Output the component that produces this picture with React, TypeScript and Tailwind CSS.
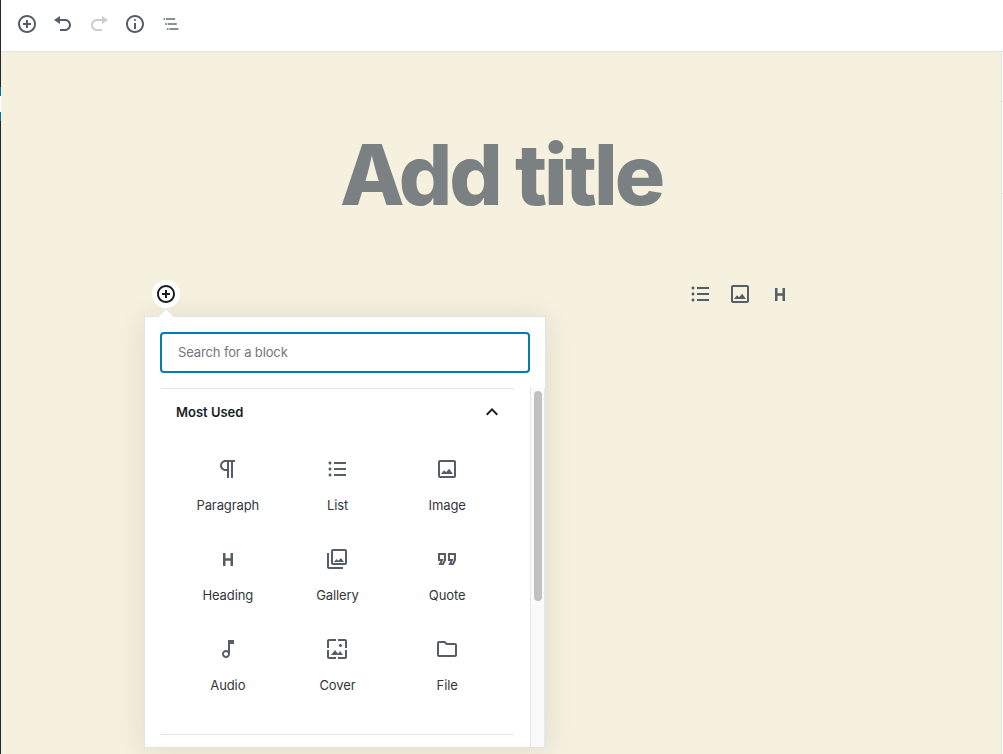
import React from "react";

type IconProps = { d: string; size?: 20 | 24; className?: string };

// Dashicons are drawn on a 20 unit grid, block icons on a 24 unit grid.
function Icon({ d, size = 24, className = "" }: IconProps) {
  return (
    <svg
      viewBox={`0 0 ${size} ${size}`}
      width={size}
      height={size}
      className={`block shrink-0 fill-current ${className}`}
      aria-hidden="true"
    >
      <path d={d} />
    </svg>
  );
}

const INSERT =
  "M10 1c-5 0-9 4-9 9s4 9 9 9 9-4 9-9-4-9-9-9zm0 16c-3.9 0-7-3.1-7-7s3.1-7 7-7 7 3.1 7 7-3.1 7-7 7zm1-11H9v3H6v2h3v3h2v-3h3V9h-3V6z";
const UNDO =
  "M12 5H7V2L1 6l6 4V7h5c2.2 0 4 1.8 4 4s-1.8 4-4 4H7v2h5c3.3 0 6-2.7 6-6s-2.7-6-6-6z";
const REDO =
  "M8 5h5V2l6 4-6 4V7H8c-2.2 0-4 1.8-4 4s1.8 4 4 4h5v2H8c-3.3 0-6-2.7-6-6s2.7-6 6-6z";
const INFO =
  "M9 15h2V9H9v6zm1-10c-.5 0-1 .5-1 1s.5 1 1 1 1-.5 1-1-.5-1-1-1zm0-4c-5 0-9 4-9 9s4 9 9 9 9-4 9-9-4-9-9-9zm0 16c-3.9 0-7-3.1-7-7s3.1-7 7-7 7 3.1 7 7-3.1 7-7 7z";
const OUTLINE =
  "M5 5H3v2h2V5zm3 8h11v-2H8v2zm9-8H6v2h11V5zM7 11H5v2h2v-2zm0 8h2v-2H7v2zm3-2v2h11v-2H10z";
const PARAGRAPH =
  "M11 5v7H9.5C7.6 12 6 10.4 6 8.5S7.6 5 9.5 5H11m8-2H9.5C6.5 3 4 5.5 4 8.5S6.5 14 9.5 14H11v7h2V5h2v16h2V5h2V3z";
const LIST =
  "M9 19h12v-2H9v2zm0-6h12v-2H9v2zm0-8v2h12V5H9zm-4-.5c-.83 0-1.5.67-1.5 1.5S4.17 7.5 5 7.5 6.5 6.83 6.5 6 5.83 4.5 5 4.5zm0 6c-.83 0-1.5.67-1.5 1.5s.67 1.5 1.5 1.5 1.5-.67 1.5-1.5-.67-1.5-1.5-1.5zm0 6c-.83 0-1.5.67-1.5 1.5s.67 1.5 1.5 1.5 1.5-.67 1.5-1.5-.67-1.5-1.5-1.5z";
const IMAGE =
  "M19 5v14H5V5h14m0-2H5c-1.1 0-2 .9-2 2v14c0 1.1.9 2 2 2h14c1.1 0 2-.9 2-2V5c0-1.1-.9-2-2-2zM6 17l3-3.86 2.1 2.1 3-3.38L18 17z";
const HEADING = "M12.5 4v5.2h-5V4H5v13h2.5v-5.2h5V17H15V4";
const GALLERY =
  "M20 4v12H8V4h12m0-2H8c-1.1 0-2 .9-2 2v12c0 1.1.9 2 2 2h12c1.1 0 2-.9 2-2V4c0-1.1-.9-2-2-2zM9 15l2.5-3 1.7 1.8L16 11l3 4zM2 6v14c0 1.1.9 2 2 2h14v-2H4V6H2z";
const QUOTE =
  "M18.62 18h-5.24l2-4H13V6h8v7.24L18.62 18zm-2-2h.76L19 12.76V8h-4v4h3.62l-2 4zm-8 2H3.38l2-4H3V6h8v7.24L8.62 18zm-2-2h.76L9 12.76V8H5v4h3.62l-2 4z";
const AUDIO =
  "M12 3l.01 10.55c-.59-.34-1.27-.55-2-.55C7.79 13 6 14.79 6 17s1.79 4 4.01 4S14 19.21 14 17V7h4V3h-6zm-1.99 16c-1.1 0-2-.9-2-2s.9-2 2-2 2 .9 2 2-.9 2-2 2z";
const COVER =
  "M4 4h7V2H4c-1.1 0-2 .9-2 2v7h2V4zm6 9l-4 5h12l-3-4-2.03 2.71L10 13zm7-4.5c0-.83-.67-1.5-1.5-1.5S14 7.67 14 8.5s.67 1.5 1.5 1.5S17 9.33 17 8.5zM20 2h-7v2h7v7h2V4c0-1.1-.9-2-2-2zm0 18h-7v2h7c1.1 0 2-.9 2-2v-7h-2v7zM4 13H2v7c0 1.1.9 2 2 2h7v-2H4v-7z";
const FILE =
  "M9.17 6l2 2H20v10H4V6h5.17M10 4H4c-1.1 0-1.99.9-1.99 2L2 18c0 1.1.9 2 2 2h16c1.1 0 2-.9 2-2V8c0-1.1-.9-2-2-2h-8l-2-2z";
const CHEVRON_UP = "M12 8l-6 6 1.41 1.41L12 10.83l4.59 4.58L18 14l-6-6z";

const blocks: { label: string; d: string; size?: 20 | 24 }[] = [
  { label: "Paragraph", d: PARAGRAPH },
  { label: "List", d: LIST },
  { label: "Image", d: IMAGE },
  { label: "Heading", d: HEADING, size: 20 },
  { label: "Gallery", d: GALLERY },
  { label: "Quote", d: QUOTE },
  { label: "Audio", d: AUDIO },
  { label: "Cover", d: COVER },
  { label: "File", d: FILE },
];

function Toolbar() {
  return (
    <header className="flex h-[52px] shrink-0 items-start gap-4 border-b border-[#e2e4e7] bg-white pt-[14px] pl-4 text-[#555d66]">
      <button aria-label="Add block"><Icon d={INSERT} size={20} /></button>
      <button aria-label="Undo"><Icon d={UNDO} size={20} /></button>
      <button aria-label="Redo" className="opacity-30"><Icon d={REDO} size={20} /></button>
      <button aria-label="Content structure"><Icon d={INFO} size={20} /></button>
      <button aria-label="Block navigation">
        <svg viewBox="0 0 24 24" width="20" height="20" className="block fill-current opacity-90" aria-hidden="true">
          <path d={OUTLINE} />
        </svg>
      </button>
    </header>
  );
}

function Inserter() {
  return (
    <div className="absolute top-[36px] -left-2 flex h-[432px] w-[402px] flex-col border border-[#e2e4e7] bg-white shadow-[0_3px_30px_rgba(25,30,35,0.1)]">
      <svg viewBox="0 0 16 9" width="16" height="9" className="absolute -top-2 left-[13px]" aria-hidden="true">
        <path d="M0 8L8 0l8 8v1H0z" className="fill-white" />
        <path d="M0 7.5L8 0l8 7.5" className="fill-none stroke-[#e2e4e7]" />
      </svg>
      <div className="px-[15px] pt-[15px]">
        <input
          type="text"
          placeholder="Search for a block"
          className="block h-[41px] w-[370px] rounded-[4px] border-2 border-[#007cba] bg-white px-4 pb-[2px] text-[13px] tracking-[-0.13px] text-[#32373c] outline-none placeholder:text-[#72777c]"
        />
      </div>
      <div className="mt-[15px] flex min-h-0 flex-1">
        <div className="flex-1 overflow-hidden px-4">
          <section className="h-[347px] border-y border-[#e2e4e7]">
            <h2 className="flex h-[47px] items-center justify-between pr-[10px] pl-[15px] text-[13px] font-semibold text-[#191e23]">
              Most Used
              <Icon d={CHEVRON_UP} className="mb-px" />
            </h2>
            <ul className="ml-[12px] grid w-[329px] grid-cols-3">
              {blocks.map((b) => (
                <li key={b.label} className="flex h-[90px] flex-col items-center pt-[21px]">
                  <span className="flex h-6 items-center text-[#555d66]">
                    <Icon d={b.d} size={b.size} />
                  </span>
                  <span className="mt-[14px] text-[13px] leading-[20px] tracking-[-0.1px] text-[#32373c]">{b.label}</span>
                </li>
              ))}
            </ul>
          </section>
        </div>
        <div className="flex w-[15px] shrink-0 justify-center border-x border-[#e8e8e8] bg-[#fafafa] pt-[3px]">
          <div className="h-[210px] w-2 rounded-full bg-[#c1c1c1]" />
        </div>
      </div>
    </div>
  );
}

export default function App() {
  return (
    <div className="flex h-[754px] w-[1003px] overflow-hidden bg-white font-['Inter',sans-serif]">
      <aside className="flex w-px shrink-0 flex-col bg-[#23282d]">
        <div className="mt-[87px] h-[34px] border-y-[9px] border-[#0073aa] bg-white" />
      </aside>
      <div className="flex min-w-0 flex-1 flex-col">
        <Toolbar />
        <div className="flex min-h-0 flex-1">
          <main className="w-[1000px] shrink-0 bg-[#f6f0de]">
            <h1 className="mt-[72px] h-[102px] text-center text-[84px] leading-[102px] font-extrabold tracking-[-0.037em] text-[#7b8083]">
              Add title
            </h1>
            <div className="relative mt-[54px] ml-[151px] flex h-7 w-[640px] items-center justify-between">
              <button
                aria-label="Add block"
                className="z-10 flex size-7 items-center justify-center rounded-full bg-white text-[#191e23]"
              >
                <Icon d={INSERT} size={20} />
              </button>
              <div className="flex items-center gap-4 text-[#555d66]">
                <Icon d={LIST} />
                <Icon d={IMAGE} />
                <span className="flex w-6 justify-center"><Icon d={HEADING} size={20} /></span>
              </div>
              <Inserter />
            </div>
          </main>
          <aside className="w-[2px] border-l border-[#e2e4e7] bg-white pt-[49px]">
            <div className="h-[93px] border-y border-[#e2e4e7]" />
          </aside>
        </div>
      </div>
    </div>
  );
}
